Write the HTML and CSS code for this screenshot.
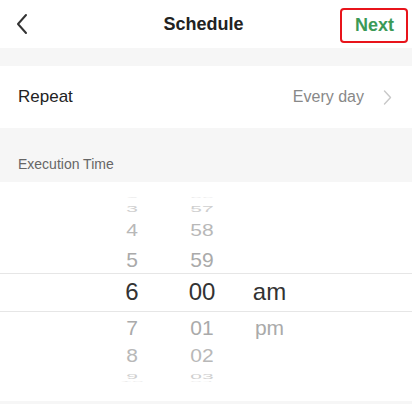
FILE: index.html
```html
<!DOCTYPE html>
<html>
<head>
<meta charset="utf-8">
<link rel="stylesheet" href="styles.css">
</head>
<body>
<header class="topbar">
  <svg class="back" width="24" height="48" viewBox="0 0 24 48"><polyline points="25,15 17,24 25,33" transform="translate(-8,0)" fill="none" stroke="#333" stroke-width="2" stroke-linecap="round" stroke-linejoin="round"/></svg>
  <h1 class="title">Schedule</h1>
  <button class="next">Next</button>
</header>
<div class="spacer"></div>
<div class="row">
  <span class="row-label">Repeat</span>
  <span class="row-value">Every day
    <svg class="chev" width="9" height="15" viewBox="0 0 9 15"><polyline points="1.5,1 7.5,7.5 1.5,14" fill="none" stroke="#c8c8c8" stroke-width="1.4" stroke-linecap="round" stroke-linejoin="round"/></svg>
  </span>
</div>
<div class="section"><span>Execution Time</span></div>
<div class="picker">
  <div class="col">
    <div class="item r0"><span>2</span></div>
    <div class="item r1"><span>3</span></div>
    <div class="item r2"><span>4</span></div>
    <div class="item r3"><span>5</span></div>
    <div class="item sel"><span>6</span></div>
    <div class="item r5"><span>7</span></div>
    <div class="item r6"><span>8</span></div>
    <div class="item r7"><span>9</span></div>
    <div class="item r8"><span>10</span></div>
  </div>
  <div class="col">
    <div class="item r0"><span>56</span></div>
    <div class="item r1"><span>57</span></div>
    <div class="item r2"><span>58</span></div>
    <div class="item r3"><span>59</span></div>
    <div class="item sel"><span>00</span></div>
    <div class="item r5"><span>01</span></div>
    <div class="item r6"><span>02</span></div>
    <div class="item r7"><span>03</span></div>
    <div class="item r8"><span>04</span></div>
  </div>
  <div class="col ampm">
    <div class="item sel"><span>am</span></div>
    <div class="item r5"><span>pm</span></div>
  </div>
</div>
</body>
</html>
```
FILE: styles.css
```css
html, body {
  margin: 0;
  padding: 0;
  background: #f6f6f6;
  font-family: "Liberation Sans", Arial, sans-serif;
}
.topbar {
  height: 48px;
  background: #fff;
  display: flex;
  align-items: center;
  position: relative;
  padding: 0 4px 0 9px;
  box-sizing: border-box;
}
.back {
  display: block;
}
.title {
  flex: 1;
  margin: 0;
  text-align: center;
  font-size: 18px;
  font-weight: bold;
  color: #222;
  padding-left: 34px;
}
.next {
  width: 68px;
  height: 35px;
  border: 2px solid #e8141b;
  border-radius: 4px;
  background: #fff;
  color: #3b9a57;
  font-family: "Liberation Sans", Arial, sans-serif;
  font-size: 18px;
  font-weight: bold;
  padding: 0 0 0 1px;
  margin-top: 2px;
}
.spacer {
  height: 18px;
}
.row {
  height: 62px;
  background: #fff;
  display: flex;
  align-items: center;
  justify-content: space-between;
  padding: 0 20px 0 18px;
}
.row-label {
  font-size: 17px;
  color: #222;
}
.row-value {
  font-size: 16px;
  color: #888;
  display: flex;
  align-items: center;
  gap: 19px;
}
.chev {
  display: block;
}
.section {
  height: 54px;
  display: flex;
  align-items: flex-end;
  padding: 0 0 10px 18px;
  box-sizing: border-box;
  font-size: 14px;
  line-height: 16px;
  color: #666;
}
.picker {
  position: relative;
  height: 219px;
  background: #fff;
  display: flex;
  padding-left: 97px;
  overflow: hidden;
}
.picker::before,
.picker::after {
  content: "";
  position: absolute;
  left: 0;
  right: 0;
  height: 1px;
  background: #e6e6e6;
}
.picker::before { top: 91px; }
.picker::after { top: 129px; }
.col {
  width: 70px;
  display: flex;
  flex-direction: column;
  padding-top: 15px;
}
.col.ampm {
  width: 65px;
  padding-top: 95px;
}
.item {
  display: flex;
  align-items: center;
  justify-content: center;
  font-size: 21px;
  color: #aaa;
  overflow: visible;
}
.item span {
  display: inline-block;
  line-height: 1;
}
.r0 { height: 0; color: #ececec; }
.r0 span { transform: scaleY(0.12); }
.r1 { height: 22px; color: #cfcfcf; }
.r1 span { transform: scaleY(0.42); }
.r2 { height: 22px; color: #b8b8b8; }
.r2 span { transform: scaleY(0.75); }
.r3 { height: 36px; color: #aaa; }
.r3 span { transform: scaleY(1); }
.sel { height: 30px; color: #333; font-size: 24px; }
.r5 { height: 40px; color: #aaa; }
.r6 { height: 16px; color: #b8b8b8; }
.r6 span { transform: scaleY(0.85); }
.r7 { height: 26px; color: #cfcfcf; }
.r7 span { transform: scaleY(0.35); }
.r8 { height: 0; margin-top: -8px; color: #ececec; }
.r8 span { transform: scaleY(0.1); }
```
